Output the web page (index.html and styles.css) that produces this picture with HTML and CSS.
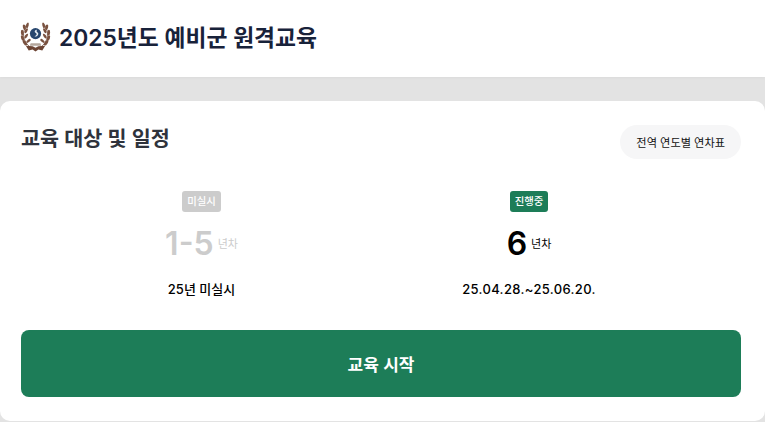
FILE: index.html
```html
<!DOCTYPE html>
<html lang="ko">

<head>
    <meta charset="UTF-8">
    <meta name="viewport" content="width=device-width, initial-scale=1.0">
    <title>2025년도 예비군 원격교육</title>
    <link rel="stylesheet" href="styles.css">
</head>

<body>

    <!-- Header -->
    <header class="header">
        <svg class="emblem" viewBox="0 0 32 32" aria-hidden="true">
            <g fill="none" stroke="#6d4534" stroke-width=".8">
                <path d="M7 3C2 11 2 20 11 27"/>
                <path d="M25 3c5 8 5 17-4 24"/>
            </g>
            <g fill="#7a5240">
                <ellipse cx="4.500" cy="6" rx="1.500" ry="3" transform="rotate(-15 4.500 6)"/>
                <ellipse cx="2.400" cy="11.500" rx="1.500" ry="3" transform="rotate(-5 2.400 11.500)"/>
                <ellipse cx="2.600" cy="17" rx="1.500" ry="3" transform="rotate(-18 2.600 17)"/>
                <ellipse cx="5" cy="22" rx="1.500" ry="3.200" transform="rotate(-35 5 22)"/>
                <ellipse cx="7.600" cy="4" rx="1.300" ry="3" transform="rotate(15 7.600 4)"/>
                <ellipse cx="6.400" cy="9.500" rx="1.300" ry="2.800" transform="rotate(28 6.400 9.500)"/>
                <ellipse cx="6.400" cy="15" rx="1.300" ry="2.800" transform="rotate(35 6.400 15)"/>
                <ellipse cx="8.800" cy="20" rx="1.300" ry="2.800" transform="rotate(50 8.800 20)"/>
                <ellipse cx="27.500" cy="6" rx="1.500" ry="3" transform="rotate(15 27.500 6)"/>
                <ellipse cx="29.600" cy="11.500" rx="1.500" ry="3" transform="rotate(5 29.600 11.500)"/>
                <ellipse cx="29.400" cy="17" rx="1.500" ry="3" transform="rotate(18 29.400 17)"/>
                <ellipse cx="27" cy="22" rx="1.500" ry="3.200" transform="rotate(35 27 22)"/>
                <ellipse cx="24.400" cy="4" rx="1.300" ry="3" transform="rotate(-15 24.400 4)"/>
                <ellipse cx="25.600" cy="9.500" rx="1.300" ry="2.800" transform="rotate(-28 25.600 9.500)"/>
                <ellipse cx="25.600" cy="15" rx="1.300" ry="2.800" transform="rotate(-35 25.600 15)"/>
                <ellipse cx="23.200" cy="20" rx="1.300" ry="2.800" transform="rotate(-50 23.200 20)"/>
            </g>
            <path d="M6 25l7 .5 3 1.500 3-1.500 7-.5-3 5-4-1-3 2-3-2-4 1z" fill="#6d4534"/>
            <path d="M11 22.500h10l1 2.500H10z" fill="#b5a79c"/>
            <circle cx="16" cy="12.500" r="7" fill="#fff"/>
            <circle cx="16" cy="12.500" r="5.800" fill="#27466e"/>
            <path d="M17.400 8.400c-1.800.3-2.700 1.400-2 2.600.7 1 2 1 1.800 2.200-.2 1.100-1.400 1.500-2.300 2.200 1.800.2 3.800-.7 4-2.600.1-1.400-1.500-1.700-1.800-2.700 0-.7.400-1.200.3-1.700z" fill="#e6edf3"/>
        </svg>
        <h1 class="header-title">2025년도 예비군 원격교육</h1>
    </header>

    <!-- Schedule card -->
    <main class="card">
        <div class="card-top">
            <h2 class="card-title">교육 대상 및 일정</h2>
            <button class="chart-btn">전역 연도별 연차표</button>
        </div>

        <div class="terms">
            <div class="term term-off">
                <span class="badge">미실시</span>
                <p class="term-year"><strong>1-5</strong> <span>년차</span></p>
                <p class="term-date">25년 미실시</p>
            </div>
            <div class="term">
                <span class="badge badge-on">진행중</span>
                <p class="term-year"><strong>6</strong> <span>년차</span></p>
                <p class="term-date term-range">25.04.28.~25.06.20.</p>
            </div>
        </div>

        <button class="start-btn">교육 시작</button>
    </main>

</body>

</html>
```

FILE: styles.css
```css
/* Global styles */
* {
    margin: 0;
    padding: 0;
    box-sizing: border-box;
}

body {
    font-family: 'Inter', 'Noto Sans CJK KR', sans-serif;
    background-color: #e3e3e3;
    height: 100vh;
    overflow: hidden;
}

/* Header */
.header {
    display: flex;
    align-items: center;
    gap: 7px;
    height: 77px;
    padding: 0 0 3px 20px;
    background-color: #fff;
    box-shadow: 0 1px 3px rgba(0, 0, 0, 0.04);
}

.emblem {
    width: 31px;
    height: 32px;
}

.header-title {
    margin: 0 0 2px 1px;
    font-size: 22.8px;
    font-weight: 600;
    color: #18223a;
}

/* Card */
.card {
    margin-top: 24px;
    height: 320px;
    padding: 24px 24px 24px 21px;
    background-color: #fff;
    border-radius: 10px;
}

.card-top {
    display: flex;
    justify-content: space-between;
    align-items: flex-start;
}

.card-title {
    font-size: 20.7px;
    font-weight: 600;
    line-height: 28px;
    color: #2f333c;
}

.chart-btn {
    height: 34px;
    padding: 0 16px;
    font-family: inherit;
    font-size: 11.2px;
    color: #111;
    background-color: #f6f6f7;
    border: none;
    border-radius: 17px;
}

/* Terms */
.terms {
    display: flex;
    justify-content: space-around;
    margin-top: 32px;
    padding: 0 33px 0 32px;
}

.term {
    display: flex;
    flex-direction: column;
    align-items: center;
    color: #000;
}

.badge {
    padding: 0 5px;
    height: 21px;
    font-size: 10.4px;
    font-weight: 500;
    line-height: 21px;
    color: #fff;
    background-color: #cccccc;
    border-radius: 3px;
}

.badge-on {
    background-color: #1d7d58;
}

.term-year {
    display: flex;
    align-items: center;
    gap: 4px;
    height: 34px;
    margin-top: 14px;
    font-size: 11px;
}

.term-year strong {
    font-size: 32px;
    font-weight: 600;
}

.term-date {
    margin-top: 20px;
    font-size: 13px;
    font-weight: 500;
    line-height: 18px;
    color: #000;
}

.term-range {
    letter-spacing: 0.34px;
}

.term-off .term-year {
    color: #cccccc;
}

/* Start button */
.start-btn {
    display: block;
    width: 720px;
    height: 67px;
    margin-top: 32px;
    font-family: inherit;
    font-size: 17px;
    font-weight: 600;
    color: #fff;
    background-color: #1d7d58;
    border: none;
    border-radius: 8px;
}
```
